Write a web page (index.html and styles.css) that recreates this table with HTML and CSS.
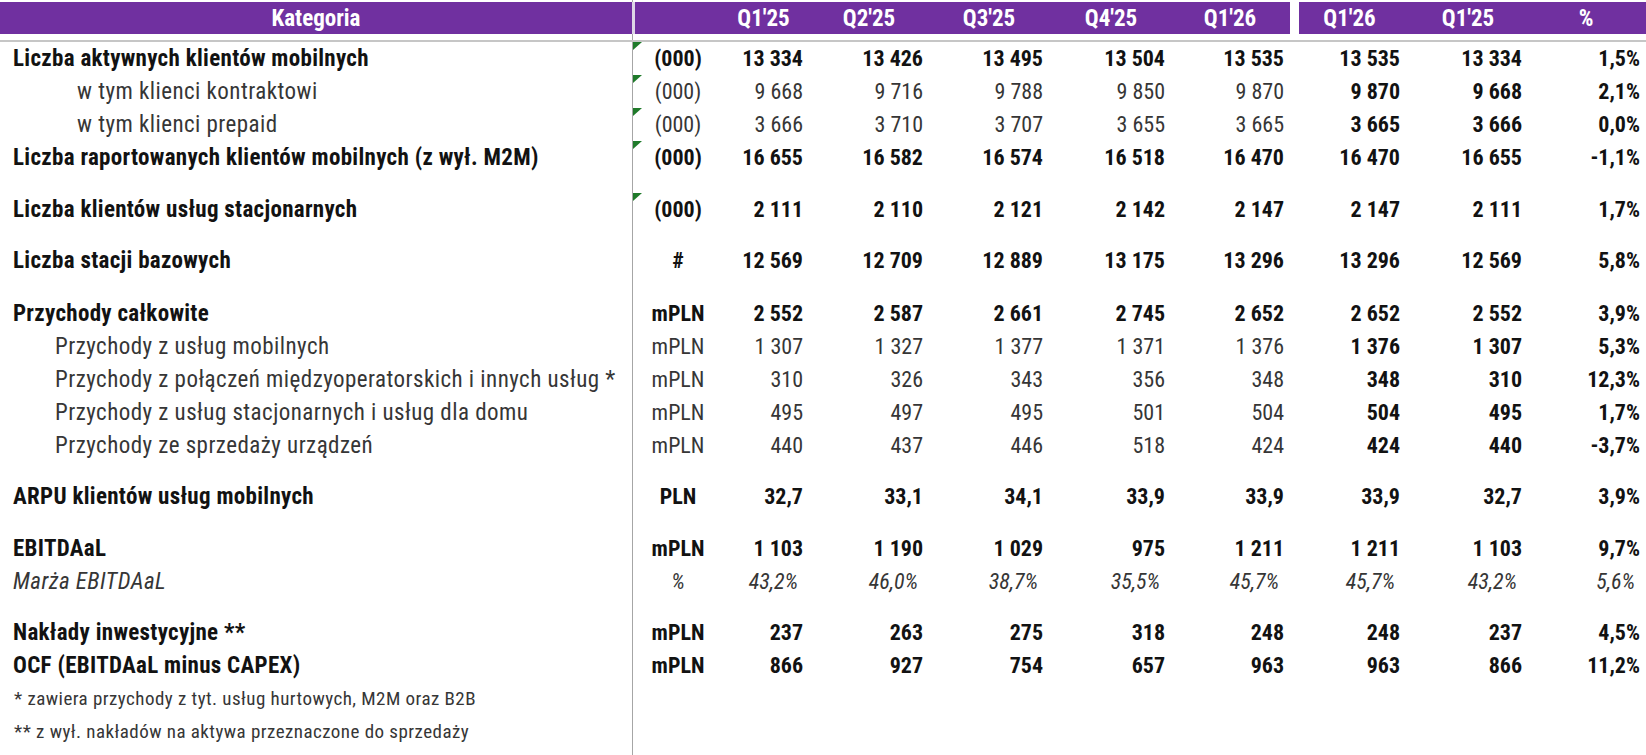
FILE: index.html
```html
<!DOCTYPE html>
<html lang="pl">
<head>
<meta charset="utf-8">
<title>Kategoria</title>
<link rel="stylesheet" href="styles.css">
</head>
<body>
<div class="sheet">
  <div class="row head">
    <div class="lbl">Kategoria</div>
    <div class="unit"></div>
    <div class="v"><span>Q1'25</span></div>
    <div class="v"><span>Q2'25</span></div>
    <div class="v"><span>Q3'25</span></div>
    <div class="v"><span>Q4'25</span></div>
    <div class="v"><span>Q1'26</span></div>
    <div class="v split"><span>Q1'26</span></div>
    <div class="v"><span>Q1'25</span></div>
    <div class="v"><span>%</span></div>
  </div>
  <div class="rule"></div>

  <div class="row b">
    <div class="lbl">Liczba aktywnych klientów mobilnych</div>
    <div class="unit flag">(000)</div>
    <div class="v">13 334</div><div class="v">13 426</div><div class="v">13 495</div><div class="v">13 504</div><div class="v">13 535</div>
    <div class="v">13 535</div><div class="v">13 334</div><div class="v">1,5%</div>
  </div>
  <div class="row">
    <div class="lbl deep">w tym klienci kontraktowi</div>
    <div class="unit flag">(000)</div>
    <div class="v">9 668</div><div class="v">9 716</div><div class="v">9 788</div><div class="v">9 850</div><div class="v">9 870</div>
    <div class="v s">9 870</div><div class="v s">9 668</div><div class="v s">2,1%</div>
  </div>
  <div class="row">
    <div class="lbl deep">w tym klienci prepaid</div>
    <div class="unit flag">(000)</div>
    <div class="v">3 666</div><div class="v">3 710</div><div class="v">3 707</div><div class="v">3 655</div><div class="v">3 665</div>
    <div class="v s">3 665</div><div class="v s">3 666</div><div class="v s">0,0%</div>
  </div>
  <div class="row b">
    <div class="lbl">Liczba raportowanych klientów mobilnych (z wył. M2M)</div>
    <div class="unit flag">(000)</div>
    <div class="v">16 655</div><div class="v">16 582</div><div class="v">16 574</div><div class="v">16 518</div><div class="v">16 470</div>
    <div class="v">16 470</div><div class="v">16 655</div><div class="v">-1,1%</div>
  </div>
  <div class="gap g19"></div>
  <div class="row b">
    <div class="lbl">Liczba klientów usług stacjonarnych</div>
    <div class="unit flag">(000)</div>
    <div class="v">2 111</div><div class="v">2 110</div><div class="v">2 121</div><div class="v">2 142</div><div class="v">2 147</div>
    <div class="v">2 147</div><div class="v">2 111</div><div class="v">1,7%</div>
  </div>
  <div class="gap g18"></div>
  <div class="row b">
    <div class="lbl">Liczba stacji bazowych</div>
    <div class="unit">#</div>
    <div class="v">12 569</div><div class="v">12 709</div><div class="v">12 889</div><div class="v">13 175</div><div class="v">13 296</div>
    <div class="v">13 296</div><div class="v">12 569</div><div class="v">5,8%</div>
  </div>
  <div class="gap g20"></div>
  <div class="row b">
    <div class="lbl">Przychody całkowite</div>
    <div class="unit">mPLN</div>
    <div class="v">2 552</div><div class="v">2 587</div><div class="v">2 661</div><div class="v">2 745</div><div class="v">2 652</div>
    <div class="v">2 652</div><div class="v">2 552</div><div class="v">3,9%</div>
  </div>
  <div class="row">
    <div class="lbl sub">Przychody z usług mobilnych</div>
    <div class="unit">mPLN</div>
    <div class="v">1 307</div><div class="v">1 327</div><div class="v">1 377</div><div class="v">1 371</div><div class="v">1 376</div>
    <div class="v s">1 376</div><div class="v s">1 307</div><div class="v s">5,3%</div>
  </div>
  <div class="row">
    <div class="lbl sub">Przychody z połączeń międzyoperatorskich i innych usług *</div>
    <div class="unit">mPLN</div>
    <div class="v">310</div><div class="v">326</div><div class="v">343</div><div class="v">356</div><div class="v">348</div>
    <div class="v s">348</div><div class="v s">310</div><div class="v s">12,3%</div>
  </div>
  <div class="row">
    <div class="lbl sub">Przychody z usług stacjonarnych i usług dla domu</div>
    <div class="unit">mPLN</div>
    <div class="v">495</div><div class="v">497</div><div class="v">495</div><div class="v">501</div><div class="v">504</div>
    <div class="v s">504</div><div class="v s">495</div><div class="v s">1,7%</div>
  </div>
  <div class="row">
    <div class="lbl sub">Przychody ze sprzedaży urządzeń</div>
    <div class="unit">mPLN</div>
    <div class="v">440</div><div class="v">437</div><div class="v">446</div><div class="v">518</div><div class="v">424</div>
    <div class="v s">424</div><div class="v s">440</div><div class="v s">-3,7%</div>
  </div>
  <div class="gap g18"></div>
  <div class="row b">
    <div class="lbl">ARPU klientów usług mobilnych</div>
    <div class="unit">PLN</div>
    <div class="v">32,7</div><div class="v">33,1</div><div class="v">34,1</div><div class="v">33,9</div><div class="v">33,9</div>
    <div class="v">33,9</div><div class="v">32,7</div><div class="v">3,9%</div>
  </div>
  <div class="gap g19"></div>
  <div class="row b">
    <div class="lbl">EBITDAaL</div>
    <div class="unit">mPLN</div>
    <div class="v">1 103</div><div class="v">1 190</div><div class="v">1 029</div><div class="v">975</div><div class="v">1 211</div>
    <div class="v">1 211</div><div class="v">1 103</div><div class="v">9,7%</div>
  </div>
  <div class="row it">
    <div class="lbl">Marża EBITDAaL</div>
    <div class="unit">%</div>
    <div class="v">43,2%</div><div class="v">46,0%</div><div class="v">38,7%</div><div class="v">35,5%</div><div class="v">45,7%</div>
    <div class="v">45,7%</div><div class="v">43,2%</div><div class="v">5,6%</div>
  </div>
  <div class="gap g18"></div>
  <div class="row b">
    <div class="lbl">Nakłady inwestycyjne **</div>
    <div class="unit">mPLN</div>
    <div class="v">237</div><div class="v">263</div><div class="v">275</div><div class="v">318</div><div class="v">248</div>
    <div class="v">248</div><div class="v">237</div><div class="v">4,5%</div>
  </div>
  <div class="row b">
    <div class="lbl">OCF (EBITDAaL minus CAPEX)</div>
    <div class="unit">mPLN</div>
    <div class="v">866</div><div class="v">927</div><div class="v">754</div><div class="v">657</div><div class="v">963</div>
    <div class="v">963</div><div class="v">866</div><div class="v">11,2%</div>
  </div>
  <div class="row note">
    <div class="lbl">* zawiera przychody z tyt. usług hurtowych, M2M oraz B2B</div>
  </div>
  <div class="row note">
    <div class="lbl">** z wył. nakładów na aktywa przeznaczone do sprzedaży</div>
  </div>
</div>
</body>
</html>
```

FILE: styles.css
```css
* { box-sizing: border-box; }
html, body { margin: 0; padding: 0; background: #fff; }
body {
  font-family: "Roboto Condensed", "Liberation Sans Narrow", "Arial Narrow", Roboto, sans-serif;
  font-size: 22px;
  color: #363636;
}
.sheet {
  width: 1646px;
  min-height: 755px;
  padding-top: 2px;
  background: linear-gradient(#a6a6a6, #a6a6a6) no-repeat 632px 0 / 1px 100%;
}
.row {
  display: grid;
  grid-template-columns: 632px 92px 85px 120px 120px 122px 119px 116px 122px 118px;
  height: 33px;
  align-items: center;
  white-space: nowrap;
}
.lbl { padding-left: 13px; font-size: 23px; letter-spacing: 0.45px; }
.b .lbl { letter-spacing: 0.3px; }
.lbl.deep { padding-left: 77px; }
.lbl.sub { padding-left: 55px; }
.unit { position: relative; text-align: center; height: 100%; display: flex; align-items: center; justify-content: center; }
.unit.flag::before {
  content: "";
  position: absolute;
  left: 1px;
  top: 0;
  border-top: 8px solid #1f7a2a;
  border-right: 9px solid transparent;
}
.v { text-align: right; padding-right: 6px; }
.b { font-weight: 700; color: #121212; }
.s { font-weight: 700; color: #121212; }
.it { font-style: italic; }
.it .v { padding-right: 11px; }

.head {
  height: 32px;
  color: #fff;
  font-weight: 700;
  background: #7030a0;
  font-size: 23px;
}
.head > div { height: 100%; display: flex; align-items: center; }
.head .lbl { justify-content: center; padding-left: 0; letter-spacing: 0; }
.head .unit { border-left: 3px solid #ddd6e6; }
.head .v { justify-content: flex-end; padding-right: 6px; }
.head .v span { display: inline-block; width: 108px; text-align: center; }
.head .split { border-left: 9px solid #fff; }

.rule { height: 8px; border-bottom: 2px solid #c6c6c6; }

.g18 { height: 18px; }
.g19 { height: 19px; }
.g20 { height: 20px; }

.note { font-size: 19px; color: #363636; }
.note .lbl { padding-left: 14px; font-size: 19px; letter-spacing: 0.45px; }
```
